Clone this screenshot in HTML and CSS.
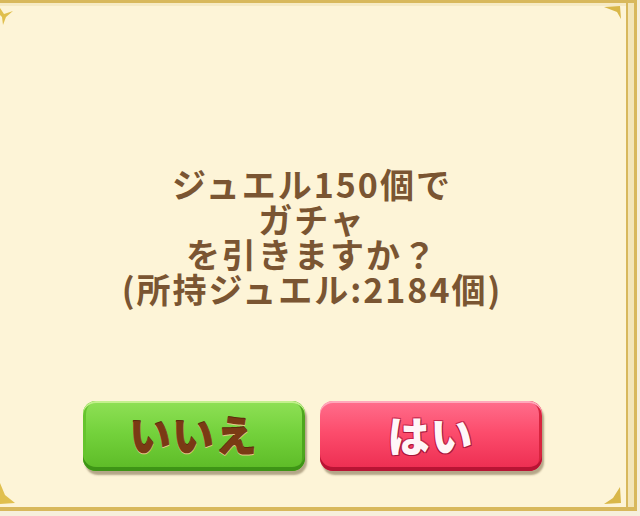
FILE: index.html
```html
<!DOCTYPE html>
<html lang="ja">
<head>
<meta charset="utf-8">
<link rel="stylesheet" href="styles.css">
</head>
<body>
<div class="frame">
  <svg class="orn orn-tl" width="14" height="20" viewBox="0 0 14 20"><path d="M0 2 L4 8 L13 5 L6 11 L3 19 L2 11 L0 9 Z" fill="#e0bf4e"/></svg>
  <svg class="orn orn-tr" width="18" height="14" viewBox="0 0 18 14"><path d="M0 1 L16 0 L17 13 L13 6 Z" fill="#d9b748"/></svg>
  <svg class="orn orn-bl" width="16" height="22" viewBox="0 0 16 22"><path d="M0 0 L5 12 L15 20 L0 21 Z" fill="#e0bf4e"/></svg>
  <svg class="orn orn-br" width="18" height="18" viewBox="0 0 18 18"><path d="M16 0 L17 16 L0 17 L9 11 Z" fill="#d9b748"/></svg>
  <div class="content">
    <p class="message">ジュエル150個で<br>ガチャ<br>を引きますか？<br>(所持ジュエル:2184個)</p>
    <div class="buttons">
      <button class="btn btn-no">いいえ</button>
      <button class="btn btn-yes">はい</button>
    </div>
  </div>
</div>
</body>
</html>
```
FILE: styles.css
```css
html, body {
  margin: 0;
  padding: 0;
}
body {
  width: 640px;
  height: 516px;
  background: #f6efdc;
  overflow: hidden;
  font-family: "Noto Sans CJK JP", "Noto Sans", sans-serif;
}
.frame {
  position: relative;
  box-sizing: border-box;
  width: 637px;
  height: 511px;
  background: #fdf4d7;
  border-top: 3px solid #d8b85c;
  border-right: 3px solid #d8b85c;
  border-bottom: 4px solid #d8b85c;
  box-shadow: inset -6px 0 0 #f3e5b8, inset -8px 0 0 #d8b85c, inset 0 3px 0 #f6eac4;
}
.orn { position: absolute; }
.orn-tl { left: 0; top: 3px; }
.orn-tr { right: 12px; top: 3px; }
.orn-bl { left: 0; bottom: 2px; }
.orn-br { right: 12px; bottom: 2px; }
.content {
  display: flex;
  flex-direction: column;
  align-items: center;
  padding-right: 10px;
}
.message {
  margin: 163px 0 0;
  font-size: 34px;
  line-height: 35px;
  font-weight: 700;
  color: #7a5532;
  text-align: center;
  letter-spacing: 2px;
}
.buttons {
  display: flex;
  gap: 15px;
  margin-top: 95px;
}
.btn {
  width: 222px;
  height: 70px;
  border-radius: 13px;
  font-family: "Noto Sans CJK JP", sans-serif;
  font-size: 42px;
  font-weight: 900;
  line-height: 1;
  padding: 0 0 4px;
  border: none;
  cursor: pointer;
  letter-spacing: 1px;
}
.btn-no {
  background: linear-gradient(#8fe056 0%, #74d23c 45%, #5cba26 100%);
  color: #7a3a14;
  box-shadow: inset 0 2px 0 #c4f08e, inset 0 -4px 0 #3e9416, inset 3px 0 0 #66c42e, inset -3px 0 0 #4ea61e, 2px 4px 2px rgba(90, 70, 40, 0.45);
  text-shadow: 0 1px 0 #e6c88a, 0 -1px 0 #5a2a0a;
}
.btn-yes {
  background: linear-gradient(#ff6e8c 0%, #fc4c6c 45%, #ec2c50 100%);
  color: #fff6f8;
  box-shadow: inset 0 2px 0 #ffa8bc, inset 0 -4px 0 #b81434, inset -3px 0 0 #d8243e, 2px 4px 2px rgba(90, 70, 40, 0.45);
  text-shadow: 1px 1px 0 #a8163a, -1px -1px 0 #c8284e, 1px -1px 0 #c8284e, -1px 1px 0 #a8163a;
}
```
